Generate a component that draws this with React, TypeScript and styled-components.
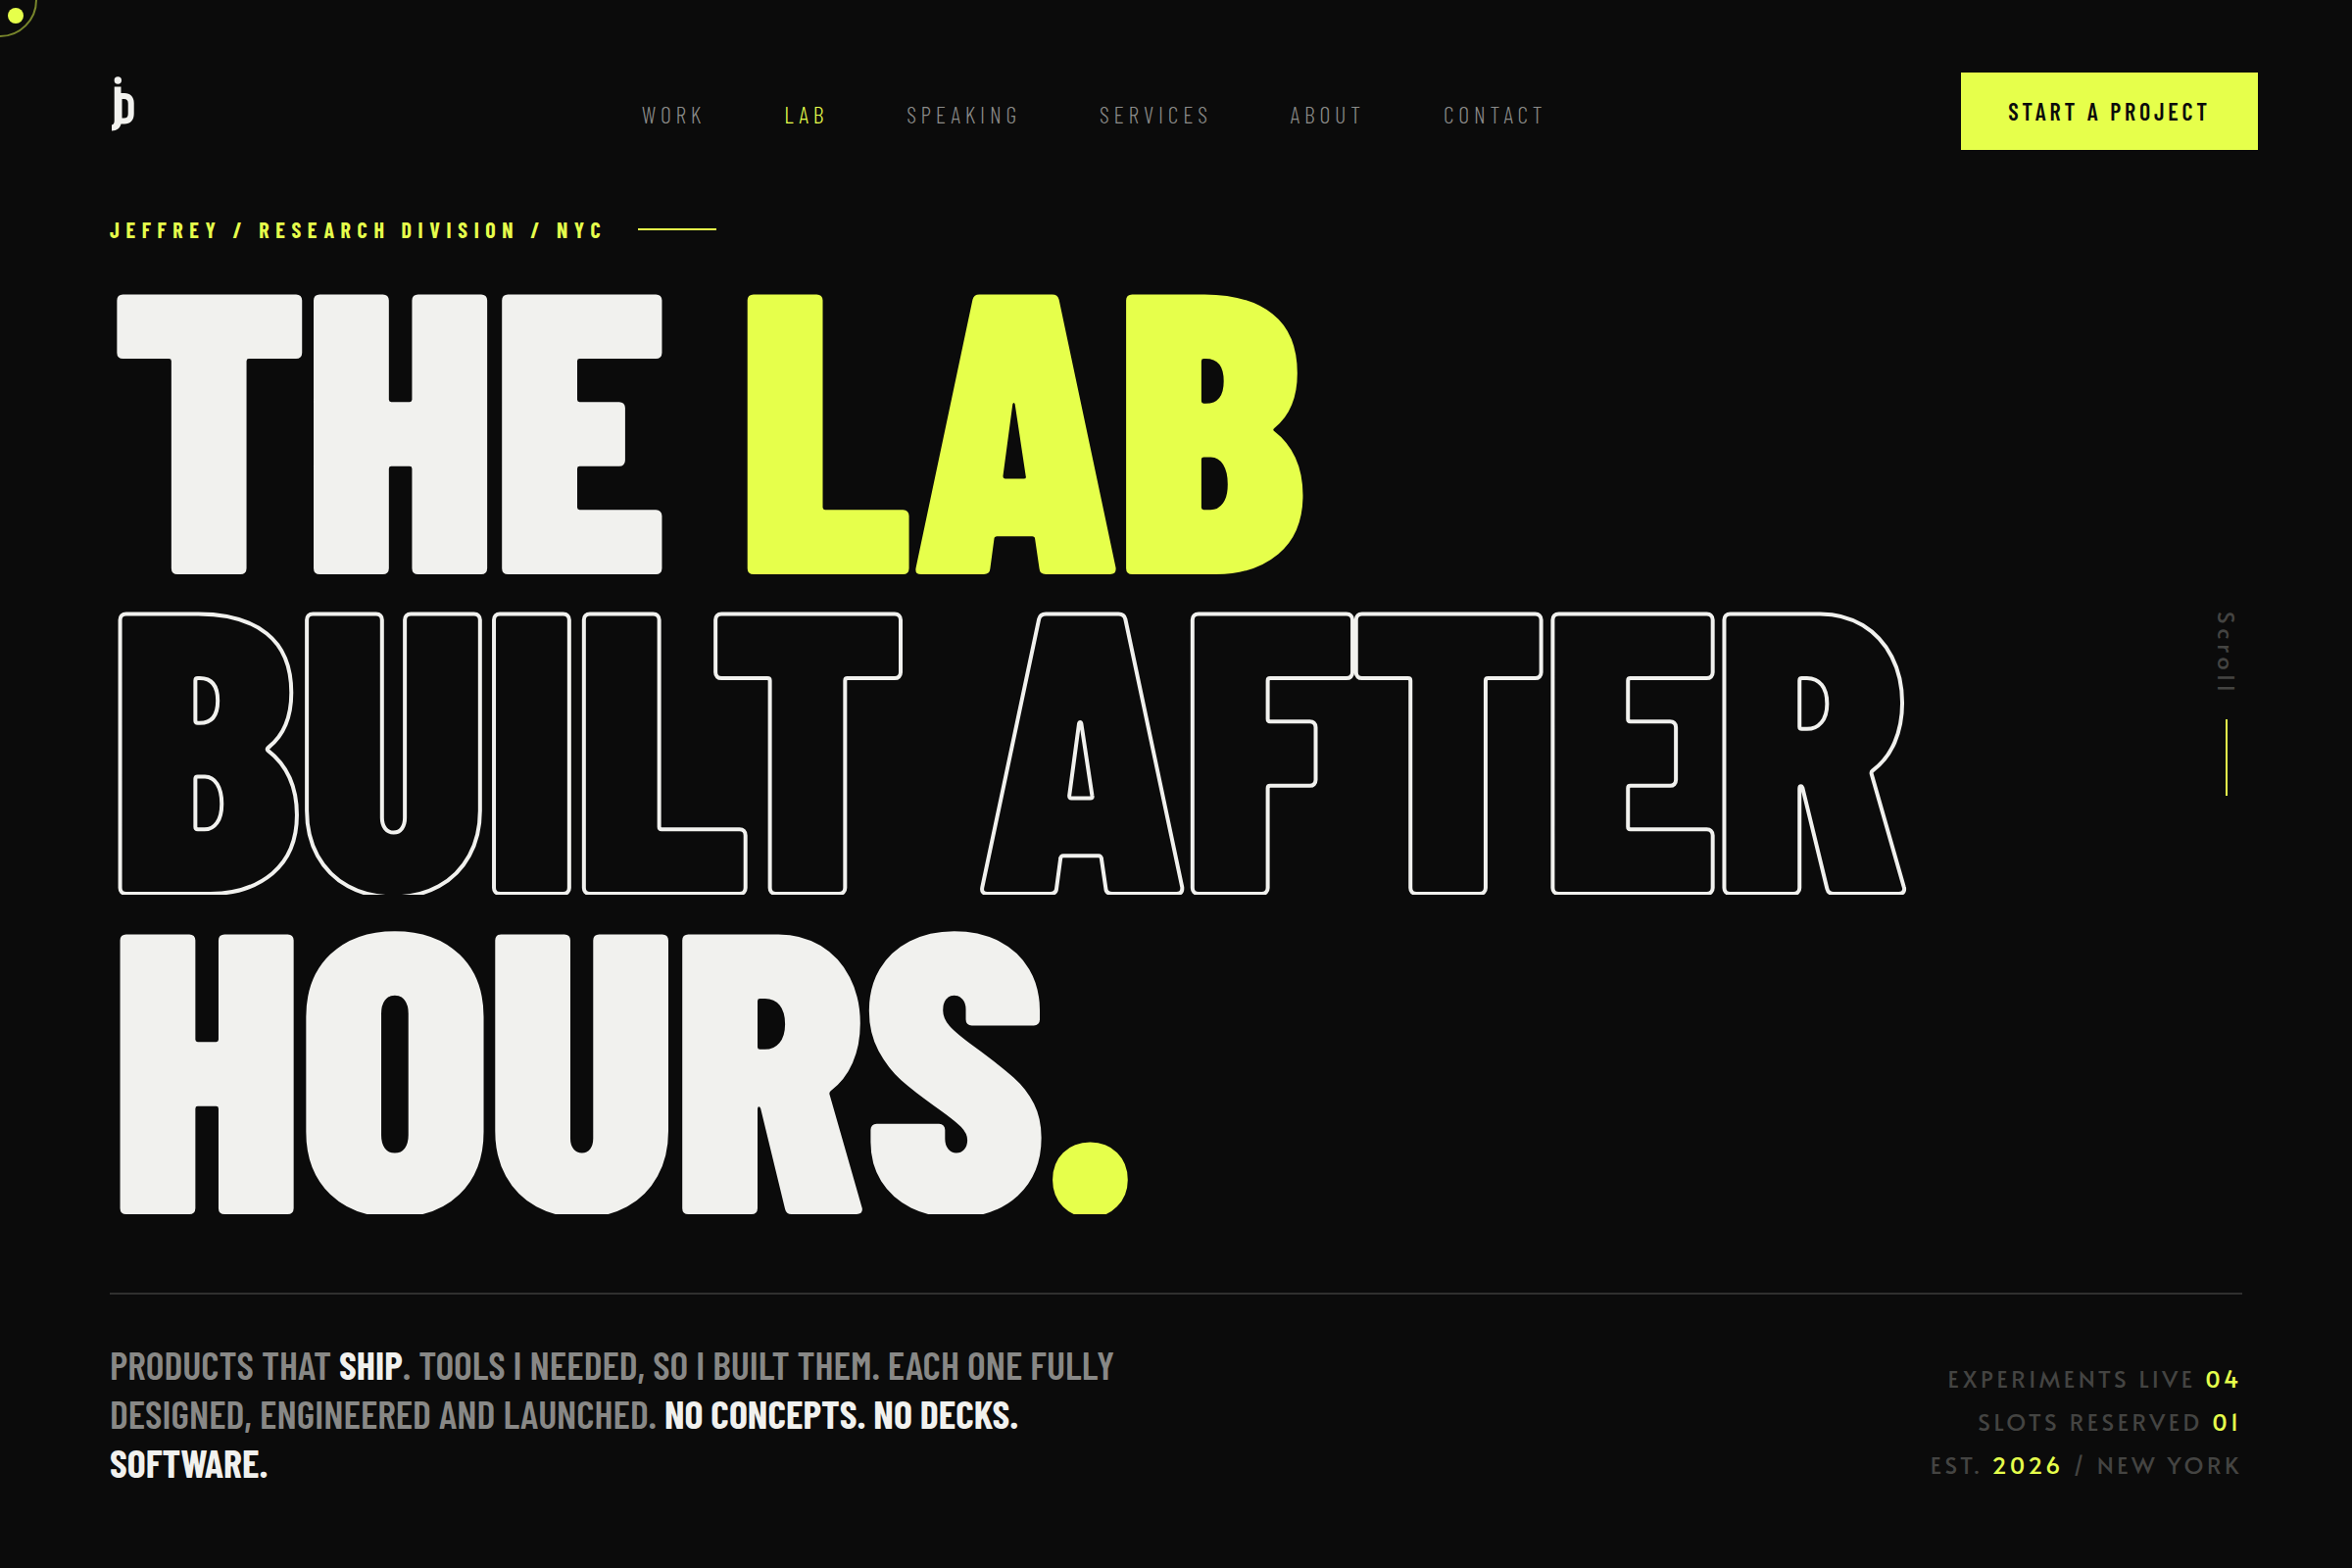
import React from 'react';
import styled, { createGlobalStyle } from 'styled-components';

const lime = '#e6ff4b';
const paper = '#f1f1ee';
const ink = '#0b0b0b';
const condensed = '"Barlow Condensed", "Roboto Condensed", "Liberation Sans", sans-serif';
const body = 'Alata, Lato, "Liberation Sans", sans-serif';

const GlobalStyle = createGlobalStyle`
  *, *::before, *::after { box-sizing: border-box; }
  body { margin: 0; background: ${ink}; color: ${paper}; font-family: ${condensed}; }
`;

const Page = styled.div`
  position: relative;
  display: flex;
  flex-direction: column;
  min-height: 100vh;
  overflow: hidden;
`;

const CursorDot = styled.span`
  position: absolute;
  top: 8px;
  left: 8px;
  width: 16px;
  height: 16px;
  border-radius: 50%;
  background: ${lime};
`;

const CursorRing = styled.span`
  position: absolute;
  top: -38px;
  left: -38px;
  width: 76px;
  height: 76px;
  border: 2px solid ${lime};
  border-radius: 50%;
  opacity: 0.5;
`;

const Header = styled.header`
  display: flex;
  justify-content: space-between;
  align-items: center;
  padding: 74px 96px 0;
`;

const LogoLink = styled.a`
  display: block;
  width: 136px;
  padding: 0 0 15px 16px;

  svg { display: block; }
`;

const Nav = styled.nav`
  display: flex;
  gap: 80px;
  padding-top: 6px;
`;

const NavLink = styled.a<{ $active?: boolean }>`
  color: ${p => (p.$active ? lime : '#8c8c8a')};
  font-size: 24px;
  font-weight: 300;
  line-height: 28px;
  letter-spacing: 0.2em;
  text-decoration: none;
  text-transform: uppercase;
`;

const ProjectButton = styled.button`
  padding: 24px 48px;
  border: 0;
  background: ${lime};
  color: ${ink};
  font: 600 24px/31px ${condensed};
  letter-spacing: 0.16em;
  text-transform: uppercase;
`;

const Hero = styled.main`
  display: flex;
  flex-direction: column;
  padding: 67px 112px 80px;
`;

const Eyebrow = styled.p`
  display: flex;
  align-items: center;
  gap: 32px;
  margin: 0 0 12px;
  color: ${lime};
  font-size: 22px;
  font-weight: 700;
  line-height: 28px;
  letter-spacing: 0.3em;
  text-transform: uppercase;

  &::after {
    content: "";
    width: 80px;
    height: 2px;
    background: ${lime};
  }
`;

const Title = styled.h1`
  margin: 0;
  font-size: 17vw;
  font-weight: 900;
  line-height: 0.8;
  letter-spacing: -0.015em;
  text-transform: uppercase;
`;

const TitleLine = styled.span<{ $outline?: boolean }>`
  display: block;
  overflow: hidden;
  white-space: nowrap;
  ${p => p.$outline && `color: transparent; -webkit-text-stroke: 4px ${paper};`}
`;

const Accent = styled.span`
  color: ${lime};
`;

const Footer = styled.div`
  display: flex;
  justify-content: space-between;
  align-items: flex-end;
  margin-top: 80px;
  padding-top: 46px;
  border-top: 2px solid #30302f;
`;

const Lead = styled.p`
  max-width: 1040px;
  margin: 0;
  color: #888886;
  font-size: 40px;
  font-weight: 600;
  line-height: 50px;
  text-transform: uppercase;

  strong { color: ${paper}; font-weight: 700; }
`;

const Stats = styled.ul`
  margin: 0;
  padding: 0;
  list-style: none;
  color: #444442;
  font-family: ${body};
  font-size: 24px;
  line-height: 44px;
  letter-spacing: 0.15em;
  text-align: right;
  text-transform: uppercase;
`;

const ScrollCue = styled.a`
  position: absolute;
  top: 624px;
  right: 112px;
  display: flex;
  flex-direction: column;
  align-items: center;
  gap: 24px;
  width: 32px;
  color: #444442;
  font-family: ${body};
  font-size: 24px;
  line-height: 32px;
  letter-spacing: 0.2em;
  text-decoration: none;

  span { writing-mode: vertical-rl; }

  &::after {
    content: "";
    width: 2px;
    height: 78px;
    background: ${lime};
  }
`;

const links = ['Work', 'Lab', 'Speaking', 'Services', 'About', 'Contact'];

function Logo() {
  return (
    <svg width="28" height="64" viewBox="0 0 28 64" aria-hidden="true">
      <circle cx="8.300" cy="8" r="3.700" fill={paper} />
      <path
        fill={paper}
        fillRule="evenodd"
        d="M4.700 14.500H11.500V21H15C21 21 24.700 25 24.700 31V42C24.700 48.500 21 52.500 15 52.500H11.500C10.500 56.500 7.500 59.500 2 59.500V53.500C4 53 4.700 51.500 4.700 49ZM12.500 27V46.500H14.500C17.500 46.500 18.700 45 18.700 42V31.500C18.700 28.500 17.500 27 14.500 27Z"
      />
    </svg>
  );
}

export default function App() {
  return (
    <Page>
      <GlobalStyle />
      <Header>
        <LogoLink href="#" aria-label="Jeffrey, home"><Logo /></LogoLink>
        <Nav aria-label="Main">
          {links.map(name => (
            <NavLink key={name} href={`#${name.toLowerCase()}`} $active={name === 'Lab'}>{name}</NavLink>
          ))}
        </Nav>
        <ProjectButton type="button">Start a project</ProjectButton>
      </Header>
      <Hero>
        <Eyebrow>Jeffrey / Research Division / NYC</Eyebrow>
        <Title>
          <TitleLine>The <Accent>Lab</Accent></TitleLine>
          <TitleLine $outline>Built after</TitleLine>
          <TitleLine>Hours<Accent>.</Accent></TitleLine>
        </Title>
        <Footer>
          <Lead>
            Products that <strong>ship</strong>. Tools I needed, so I built them. Each one fully
            designed, engineered and launched. <strong>No concepts. No decks. Software.</strong>
          </Lead>
          <Stats>
            <li>Experiments live <Accent>04</Accent></li>
            <li>Slots reserved <Accent>01</Accent></li>
            <li>Est. <Accent>2026</Accent> / New York</li>
          </Stats>
        </Footer>
      </Hero>
      <ScrollCue href="#work"><span>Scroll</span></ScrollCue>
      <CursorRing />
      <CursorDot />
    </Page>
  );
}
